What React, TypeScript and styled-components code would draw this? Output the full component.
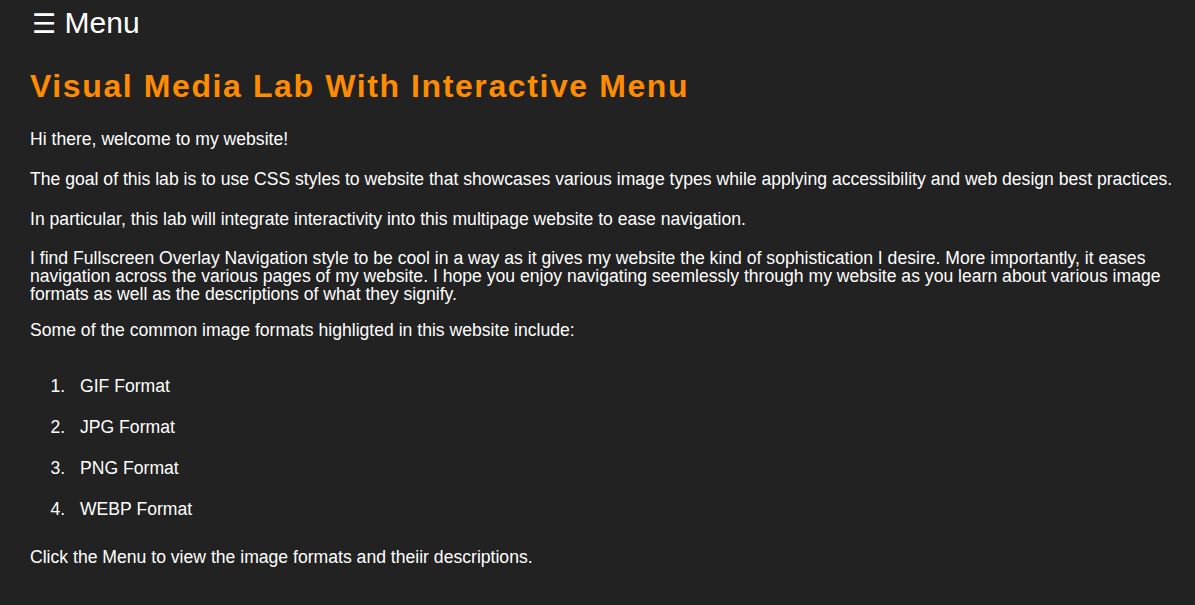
import React from "react";
import styled, { createGlobalStyle } from "styled-components";

const GlobalStyle = createGlobalStyle`
  html, body {
    margin: 0;
    padding: 0;
    background: #222222;
  }
  body {
    font-family: "Liberation Sans", Arial, sans-serif;
    font-size: 17.6px;
    color: #ffffff;
  }
`;

const Page = styled.div`
  padding: 0 12px 40px 30px;
`;

const MenuToggle = styled.div`
  font-size: 30px;
  line-height: 34.5px;
  padding-top: 6.1px;
  color: #ffffff;
  cursor: pointer;
`;

const Burger = styled.span`
  font-family: "DejaVu Sans", sans-serif;
  font-size: 27px;
  display: inline-block;
  margin-left: 2px;
`;

const Title = styled.h1`
  font-size: 32px;
  font-weight: bold;
  letter-spacing: 0.05em;
  color: #ff8c00;
  margin: 26.8px 0 24.9px;
  line-height: 36.8px;
`;

const Para = styled.p<{ $gap?: number }>`
  margin: 0 0 ${(p) => p.$gap ?? 17.5}px;
  line-height: 18.2px;
`;

const List = styled.ol`
  margin: 26px 0 19.1px;
  padding-left: 40px;
`;

const Item = styled.li`
  padding: 11.4px 0 11.4px 10px;
  line-height: 18.2px;
`;

const formats = ["GIF Format", "JPG Format", "PNG Format", "WEBP Format"];

export default function App() {
  return (
    <>
      <GlobalStyle />
      <Page>
        <MenuToggle>
          <Burger>☰</Burger> Menu
        </MenuToggle>
        <Title>Visual Media Lab With Interactive Menu</Title>
        <Para $gap={21.8}>Hi there, welcome to my website!</Para>
        <Para $gap={21.8}>
          The goal of this lab is to use CSS styles to website that showcases various image types while applying accessibility and web design best practices.
        </Para>
        <Para $gap={20.7}>
          In particular, this lab will integrate interactivity into this multipage website to ease navigation.
        </Para>
        <Para>
          I find Fullscreen Overlay Navigation style to be cool in a way as it gives my website the kind of sophistication I desire. More importantly, it eases navigation across the various pages of my website. I hope you enjoy navigating seemlessly through my website as you learn about various image formats as well as the descriptions of what they signify.
        </Para>
        <Para>Some of the common image formats highligted in this website include:</Para>
        <List>
          {formats.map((f) => (
            <Item key={f}>{f}</Item>
          ))}
        </List>
        <Para>Click the Menu to view the image formats and theiir descriptions.</Para>
      </Page>
    </>
  );
}
